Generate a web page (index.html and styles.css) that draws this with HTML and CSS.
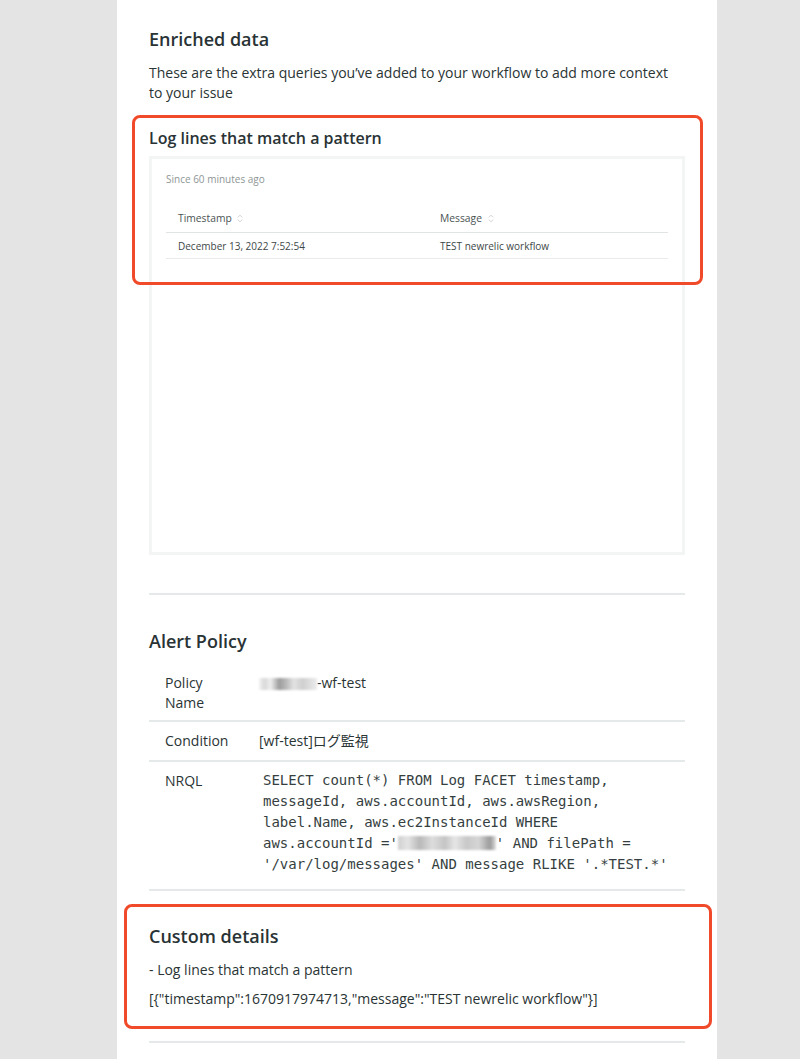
FILE: index.html
```html
<!DOCTYPE html>
<html lang="en">
<head>
<meta charset="utf-8">
<title>Enriched data</title>
<link rel="stylesheet" href="styles.css">
</head>
<body>
<div class="card">
  <section class="enriched">
    <h2 class="h2 first">Enriched data</h2>
    <p class="desc">These are the extra queries you’ve added to your workflow to add more context to your issue</p>
    <h3 class="h3">Log lines that match a pattern</h3>
    <div class="frame">
      <div class="since">Since 60 minutes ago</div>
      <table class="logs">
        <thead>
          <tr>
            <th class="col-ts">Timestamp <svg class="sort" width="6" height="9" viewBox="0 0 6 9"><path d="M0.8 3.4 L3 1.2 L5.2 3.4 M0.8 5.6 L3 7.8 L5.2 5.6" fill="none" stroke="#c9cdcd" stroke-width="0.9"/></svg></th>
            <th>Message <svg class="sort" width="6" height="9" viewBox="0 0 6 9"><path d="M0.8 3.4 L3 1.2 L5.2 3.4 M0.8 5.6 L3 7.8 L5.2 5.6" fill="none" stroke="#c9cdcd" stroke-width="0.9"/></svg></th>
          </tr>
        </thead>
        <tbody>
          <tr>
            <td>December 13, 2022 7:52:54</td>
            <td>TEST newrelic workflow</td>
          </tr>
        </tbody>
      </table>
    </div>
  </section>
  <hr class="rule rule1">
  <section class="policy">
    <h2 class="h2">Alert Policy</h2>
    <div class="ptable">
      <div class="prow prow1">
        <div class="plabel">Policy Name</div>
        <div class="pval"><span class="blur blur-name"></span>-wf-test</div>
      </div>
      <div class="prow">
        <div class="plabel">Condition</div>
        <div class="pval">[wf-test]ログ監視</div>
      </div>
      <div class="prow">
        <div class="plabel">NRQL</div>
        <div class="pval mono">SELECT count(*) FROM Log FACET timestamp,<br>messageId, aws.accountId, aws.awsRegion,<br>label.Name, aws.ec2InstanceId WHERE<br>aws.accountId ='<span class="blur blur-id"></span>' AND filePath =<br>'/var/log/messages' AND message RLIKE '.*TEST.*'</div>
      </div>
    </div>
  </section>
  <section class="custom">
    <h2 class="h2">Custom details</h2>
    <p class="line l1">- Log lines that match a pattern</p>
    <p class="line l2">[{"timestamp":1670917974713,"message":"TEST newrelic workflow"}]</p>
  </section>
  <hr class="rule rule2">

  <div class="mark mark1"></div>
  <div class="mark mark2"></div>
</div>
</body>
</html>
```

FILE: styles.css
```css
html, body {
  margin: 0;
  padding: 0;
}
body {
  background: #e4e4e4;
  font-family: "Open Sans", "Noto Sans CJK JP", sans-serif;
  color: #293335;
}
.card {
  position: relative;
  margin-left: 117px;
  width: 600px;
  min-height: 1059px;
  box-sizing: border-box;
  padding: 27px 32px 0;
  background: #ffffff;
  overflow: hidden;
}
.h2 {
  margin: 0;
  font-size: 18px;
  line-height: 24px;
  font-weight: 600;
  color: #293335;
}
.desc {
  margin: 12px 0 0;
  font-size: 14px;
  line-height: 20px;
  color: #2a3434;
}
.h3 {
  margin: 24px 0 0;
  font-size: 16px;
  line-height: 22px;
  font-weight: 600;
  color: #293335;
}
.frame {
  margin-top: 7px;
  height: 399px;
  box-sizing: border-box;
  border: 3px solid #f3f4f4;
  padding: 12px 14px 0;
}
.since {
  font-size: 10px;
  line-height: 16px;
  color: #8e9696;
}
.logs {
  margin-top: 18px;
  width: 100%;
  border-collapse: collapse;
  font-size: 10px;
  line-height: 16px;
  color: #3e4747;
}
.logs th {
  text-align: left;
  font-weight: 400;
  font-size: 10.3px;
  padding: 5px 12px 6px;
  border-bottom: 1px solid #e1e4e4;
  color: #4a5353;
}
.logs th.col-ts {
  width: 238px;
}
.logs td {
  padding: 5px 12px 4px;
  border-bottom: 1px solid #e9ebeb;
}
.sort {
  vertical-align: -1px;
  margin-left: 3px;
}
.rule {
  border: 0;
  height: 2px;
  background: #e6e9e9;
  margin: 0;
}
.rule1 {
  margin-top: 38px;
}
.policy .h2 {
  margin-top: 34px;
}
.ptable {
  margin-top: 11px;
}
.prow {
  display: grid;
  grid-template-columns: 110px 1fr;
  border-bottom: 2px solid #e6e9e9;
  font-size: 14px;
  line-height: 20px;
  color: #2a3434;
}
.plabel {
  padding: 9px 16px 9px 16px;
}
.pval {
  padding: 9px 0 9px 0;
}
.prow1 .plabel,
.prow1 .pval {
  padding-bottom: 7px;
}
.mono {
  font-family: "DejaVu Sans Mono", "Liberation Mono", monospace;
  font-size: 14px;
  line-height: 21px;
  padding: 8px 0 14px 4px;
  color: #363f3f;
}
.blur {
  display: inline-block;
  vertical-align: -2px;
  filter: blur(1.2px);
}
.blur-name {
  width: 58px;
  height: 12px;
  background: linear-gradient(90deg, #f2f2f2 0%, #d8d8d8 10%, #eeeeee 20%, #9c9c9c 35%, #bdbdbd 48%, #e3e3e3 60%, #cfcfcf 75%, #ececec 100%);
}
.blur-id {
  width: 98px;
  height: 14px;
  background: linear-gradient(90deg, #d0d0d0 0%, #e4e4e4 10%, #b8b8b8 22%, #dddddd 35%, #c4c4c4 48%, #e6e6e6 58%, #c8c8c8 70%, #d6d6d6 82%, #9a9a9a 94%, #e0e0e0 100%);
}
.custom .h2 {
  margin-top: 33px;
}
.line {
  margin: 0;
  font-size: 14px;
  line-height: 20px;
  color: #2a3434;
}
.l1 {
  margin-top: 12px;
}
.l2 {
  margin-top: 9px;
}
.rule2 {
  margin-top: 32px;
}
.mark {
  position: absolute;
  border: 3.5px solid #f04a2a;
  border-radius: 8px;
  box-sizing: border-box;
}
.mark1 {
  left: 15px;
  top: 115px;
  width: 571px;
  height: 170px;
}
.mark2 {
  left: 7px;
  top: 904px;
  width: 588px;
  height: 125px;
}
```
